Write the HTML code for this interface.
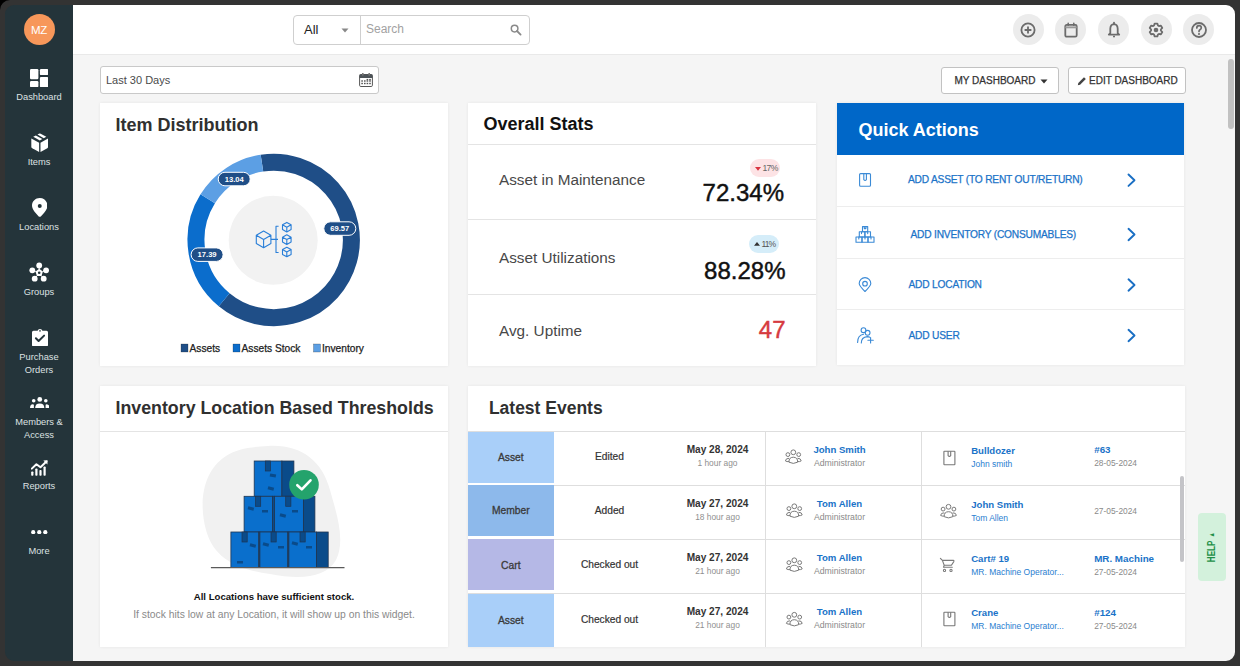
<!DOCTYPE html>
<html><head><meta charset="utf-8">
<style>
*{box-sizing:border-box;margin:0;padding:0}
html,body{width:1240px;height:666px;overflow:hidden;background:#f5f5f5;font-family:"Liberation Sans",sans-serif;position:relative}
.a{position:absolute}
#frame{position:absolute;left:5px;top:5px;width:1230px;height:656px;border-radius:9px;box-shadow:0 0 0 30px #333333;z-index:50;pointer-events:none}
#corner{position:absolute;left:0;top:0;width:11px;height:11px;background:#000;z-index:51}
#corner::after{content:"";position:absolute;left:0;top:0;width:22px;height:22px;border-radius:11px;background:#333333}
#side{position:absolute;left:0;top:0;width:73px;height:666px;background:#24343a}
#head{position:absolute;left:73px;top:0;width:1167px;height:55px;background:#fff;border-bottom:1px solid #e9e9e9}
.card{position:absolute;background:#fff;box-shadow:0 0 3px rgba(0,0,0,0.07)}
.nl{position:absolute;left:5px;width:68px;text-align:center;color:#dde1e2;font-size:9.3px;line-height:13px}
.ni{position:absolute;fill:#fff}
.ttl{position:absolute;font-weight:bold;font-size:18px;color:#303030;line-height:22px;white-space:nowrap}
.hc{position:absolute;top:14px;width:31px;height:31px;border-radius:50%;background:#ececec}
.hc svg{position:absolute;left:5.5px;top:5.5px;width:20px;height:20px}
.btn{position:absolute;top:66.5px;height:27px;border:1px solid #c2c2c2;border-radius:3px;background:#fff;font-size:10px;color:#333;line-height:25px;white-space:nowrap;-webkit-text-stroke:0.25px #333}
.qa{font-size:10.2px;color:#1b73c8;line-height:12px;white-space:nowrap;letter-spacing:-0.2px;-webkit-text-stroke:0.25px #1b73c8}
.tc{left:467.5px;width:86.7px;height:51px;font-size:10.3px;color:#3a3a3a;text-align:center;line-height:52px;-webkit-text-stroke:0.3px #3a3a3a}
.act{left:559px;width:101px;text-align:center;font-size:10.2px;color:#333;line-height:12px;-webkit-text-stroke:0.2px #333}
.dt{left:667px;width:101px;text-align:center;font-size:10.1px;font-weight:bold;color:#333;line-height:12px}
.ds{left:667px;width:101px;text-align:center;font-size:8.4px;color:#8f8f8f;line-height:10px}
.un{left:789.5px;width:100px;text-align:center;font-size:9.6px;font-weight:bold;color:#1a73c8;line-height:12px}
.ur{left:789.5px;width:100px;text-align:center;font-size:8.7px;color:#8a8a8a;line-height:11px}
.inm{left:971.2px;font-size:9.6px;font-weight:bold;color:#1a73c8;line-height:12px;white-space:nowrap}
.isb{left:971.2px;font-size:8.5px;color:#2a7ed0;line-height:11px;white-space:nowrap}
.nn{left:1094.2px;font-size:9.8px;font-weight:bold;color:#1a73c8;line-height:12px;white-space:nowrap}
.nd{left:1094.2px;font-size:8.4px;color:#8a8a8a;line-height:11px;white-space:nowrap}
</style></head>
<body>
<div id="side"></div>
<div id="head"></div>

<!-- avatar -->
<div class="a" style="left:23.5px;top:14px;width:31px;height:31px;border-radius:50%;background:#f7975a;color:#fff;font-size:11.5px;line-height:33px;text-align:center;letter-spacing:-0.2px">MZ</div>

<!-- sidebar items -->
<svg class="ni" style="left:30px;top:68.5px" width="18.3" height="18.3" viewBox="0 0 18.3 18.3">
  <rect x="0" y="0" width="8.4" height="10.2" rx="1.2"/><rect x="0" y="12.1" width="8.4" height="6.2" rx="1.2"/>
  <rect x="9.9" y="0" width="8.4" height="6.1" rx="1.2"/><rect x="9.9" y="7.9" width="8.4" height="10.4" rx="1.2"/>
</svg>
<div class="nl" style="top:91px">Dashboard</div>

<svg class="ni" style="left:30.5px;top:132.8px" width="17.6" height="19" viewBox="0 0 18 19.5">
  <path d="M0.3 5.6 L8.3 9.9 L8.3 19.4 L1.3 15.6 Q0.3 15 0.3 14 Z"/>
  <path d="M17.7 5.6 L9.7 9.9 L9.7 19.4 L16.7 15.6 Q17.7 15 17.7 14 Z"/>
  <path d="M2.3 3.9 L4.9 2.5 L11.6 6.2 L9 7.7 Z"/>
  <path d="M6.6 1.6 L8.1 0.8 Q9 0.4 9.9 0.8 L15.7 3.9 L13.1 5.4 Z"/>
</svg>
<div class="nl" style="top:156px">Items</div>

<svg class="ni" style="left:31.5px;top:197.5px" width="15.5" height="19" viewBox="0 0 15.5 19">
  <path fill-rule="evenodd" d="M7.75 0 C3.5 0 0 3.3 0 7.6 C0 11.6 4.2 15.9 6.7 18.4 Q7.75 19.3 8.8 18.4 C11.3 15.9 15.5 11.6 15.5 7.6 C15.5 3.3 12 0 7.75 0 Z M7.75 6 A2 2 0 1 0 7.75 10 A2 2 0 1 0 7.75 6 Z"/>
</svg>
<div class="nl" style="top:221px">Locations</div>

<svg class="ni" style="left:29px;top:262px" width="20" height="20" viewBox="0 0 20 20">
  <circle cx="10.2" cy="3.5" r="2.9"/><circle cx="3.3" cy="8.3" r="2.9"/><circle cx="17.1" cy="8.3" r="2.9"/>
  <circle cx="5.7" cy="16.7" r="2.9"/><circle cx="14.7" cy="16.7" r="2.9"/><path d="M10.2 3.5 L10.2 7 M3.3 8.3 L6.7 9.5 M17.1 8.3 L13.7 9.5 M5.7 16.7 L8 13.7 M14.7 16.7 L12.4 13.7" stroke="#fff" stroke-width="1"/>
  <path fill-rule="evenodd" d="M10.2 6.8 L13.9 9.5 L12.5 13.9 L7.9 13.9 L6.5 9.5 Z M10.2 9.4 A1.3 1.3 0 1 0 10.2 12 A1.3 1.3 0 1 0 10.2 9.4 Z"/>
</svg>
<div class="nl" style="top:286px">Groups</div>

<svg class="ni" style="left:31.5px;top:328.5px" width="16" height="17.5" viewBox="0 0 16 17.5">
  <path fill-rule="evenodd" d="M1.5 1.8 L5.6 1.8 Q6 0 8 0 Q10 0 10.4 1.8 L14.5 1.8 Q16 1.8 16 3.3 L16 16 Q16 17.5 14.5 17.5 L1.5 17.5 Q0 17.5 0 16 L0 3.3 Q0 1.8 1.5 1.8 Z M8 1.1 A0.8 0.8 0 1 0 8 2.7 A0.8 0.8 0 1 0 8 1.1 Z"/>
  <path d="M3.9 9.3 L6.6 12 L12.1 6.6" stroke="#24343a" stroke-width="2" fill="none" stroke-linecap="round" stroke-linejoin="round"/>
</svg>
<div class="nl" style="top:351px">Purchase</div>
<div class="nl" style="top:364px">Orders</div>

<svg class="ni" style="left:29.5px;top:396.5px" width="19.5" height="11.5" viewBox="0 0 19.5 11.5">
  <circle cx="9.75" cy="2.4" r="2.4"/><circle cx="3.7" cy="3.8" r="1.8"/><circle cx="15.8" cy="3.8" r="1.8"/>
  <path d="M5.2 11 Q5.2 6.6 9.75 6.6 Q14.3 6.6 14.3 11 Z"/>
  <path d="M0 11 Q0 7.5 2.8 7.2 Q3.9 7.2 3.9 8 L3.9 11 Z"/>
  <path d="M19.5 11 Q19.5 7.5 16.7 7.2 Q15.6 7.2 15.6 8 L15.6 11 Z"/>
</svg>
<div class="nl" style="top:416px">Members &amp;</div>
<div class="nl" style="top:429px">Access</div>

<svg class="ni" style="left:31px;top:459.5px" width="17" height="16" viewBox="0 0 17 16">
  <rect x="0.2" y="11.5" width="2.2" height="4.3" rx="0.8"/><rect x="4.3" y="8.4" width="2.2" height="7.4" rx="0.8"/>
  <rect x="8.4" y="10" width="2.2" height="5.8" rx="0.8"/><rect x="12.5" y="6.5" width="2.2" height="9.3" rx="0.8"/>
  <path d="M0.8 8.6 L5.4 4.2 L9.5 7.2 L15.4 1.6" stroke="#fff" stroke-width="2" fill="none" stroke-linecap="round" stroke-linejoin="round"/>
  <path d="M12.3 0.5 L16.6 0.3 L16.4 4.6 Z"/>
</svg>
<div class="nl" style="top:480px">Reports</div>

<svg class="ni" style="left:31px;top:529.5px" width="16.5" height="4.5" viewBox="0 0 16.5 4.5">
  <circle cx="2.2" cy="2.2" r="2.1"/><circle cx="8.25" cy="2.2" r="2.1"/><circle cx="14.3" cy="2.2" r="2.1"/>
</svg>
<div class="nl" style="top:545px">More</div>

<!-- search -->
<div class="a" style="left:292.5px;top:14.5px;width:237px;height:30px;border:1px solid #cfcfcf;border-radius:4px;background:#fff"></div>
<div class="a" style="left:359.5px;top:15px;width:1px;height:29px;background:#cfcfcf"></div>
<div class="a" style="left:304px;top:22px;font-size:13px;color:#222;line-height:16px">All</div>
<svg class="a" style="left:340.5px;top:27.5px" width="8" height="5" viewBox="0 0 8 5"><path d="M0.5 0.5 L7.5 0.5 L4 4.5 Z" fill="#888"/></svg>
<div class="a" style="left:366px;top:22px;font-size:12px;color:#a2a2a2;line-height:15px">Search</div>
<svg class="a" style="left:510px;top:23.5px" width="12" height="12" viewBox="0 0 12 12"><circle cx="4.6" cy="4.6" r="3.3" stroke="#8a8a8a" stroke-width="1.5" fill="none"/><path d="M7 7 L10.6 10.6" stroke="#8a8a8a" stroke-width="1.8" stroke-linecap="round"/></svg>

<!-- header icons -->
<div class="hc" style="left:1012.5px"><svg viewBox="0 0 20 20"><circle cx="10" cy="10" r="6.6" stroke="#6b6b6b" stroke-width="1.8" fill="none"/><path d="M10 6.6 L10 13.4 M6.6 10 L13.4 10" stroke="#6b6b6b" stroke-width="1.8"/></svg></div>
<div class="hc" style="left:1055px"><svg viewBox="0 0 20 20"><rect x="4.3" y="4.9" width="11.4" height="11.8" rx="1.4" stroke="#6b6b6b" stroke-width="1.8" fill="none"/><rect x="4.3" y="6.4" width="11.4" height="1.9" fill="#9a9a9a"/><path d="M7.2 3.4 L7.2 5.2 M12.8 3.4 L12.8 5.2" stroke="#6b6b6b" stroke-width="1.6" stroke-linecap="round"/></svg></div>
<div class="hc" style="left:1098px"><svg viewBox="0 0 20 20"><path d="M10 4.2 Q13.6 4.4 13.7 8.8 L13.7 13.2 L15.2 14.6 L4.8 14.6 L6.3 13.2 L6.3 8.8 Q6.4 4.4 10 4.2 Z" stroke="#6b6b6b" stroke-width="1.8" fill="none" stroke-linejoin="round"/><path d="M9 16.3 L11 16.3 L10 17.2 Z" stroke="#6b6b6b" stroke-width="1" fill="#6b6b6b"/><path d="M10 2.6 L10 4.2" stroke="#6b6b6b" stroke-width="1.8" stroke-linecap="round"/></svg></div>
<div class="hc" style="left:1140.5px"><svg viewBox="0 0 20 20"><path d="M8.01 5.52 L8.63 3.54 L11.37 3.54 L11.99 5.52 L12.88 6.04 L14.90 5.58 L16.28 7.96 L14.87 9.49 L14.87 10.51 L16.28 12.04 L14.90 14.42 L12.88 13.96 L11.99 14.48 L11.37 16.46 L8.63 16.46 L8.01 14.48 L7.12 13.96 L5.10 14.42 L3.72 12.04 L5.13 10.51 L5.13 9.49 L3.72 7.96 L5.10 5.58 L7.12 6.04 Z" stroke="#6b6b6b" stroke-width="1.8" fill="none" stroke-linejoin="round"/><circle cx="10" cy="10" r="2.3" fill="#6b6b6b"/></svg></div>
<div class="hc" style="left:1183px"><svg viewBox="0 0 20 20"><circle cx="10" cy="10" r="7" stroke="#6b6b6b" stroke-width="1.8" fill="none"/><path d="M7.8 8 Q7.8 5.6 10 5.6 Q12.3 5.6 12.3 7.7 Q12.3 9 10.9 9.7 Q10 10.2 10 11.5" stroke="#6b6b6b" stroke-width="1.7" fill="none" stroke-linecap="round"/><circle cx="10" cy="14" r="1.05" fill="#6b6b6b"/></svg></div>

<!-- date filter -->
<div class="a" style="left:99.5px;top:66px;width:279px;height:27.5px;border:1px solid #c9c9c9;border-radius:3px;background:#fff"></div>
<div class="a" style="left:106px;top:73px;font-size:11px;color:#4a4a4a;line-height:14px">Last 30 Days</div>
<svg class="a" style="left:359px;top:73px" width="14" height="14" viewBox="0 0 14 14">
  <rect x="0.6" y="1.5" width="12.8" height="12" rx="1.2" fill="#fff" stroke="#555" stroke-width="1"/>
  <rect x="0.6" y="1.5" width="12.8" height="3.5" fill="#4d5358"/>
  <rect x="3" y="0" width="1.6" height="2.6" fill="#777"/><rect x="9.4" y="0" width="1.6" height="2.6" fill="#777"/>
  <g fill="#555"><rect x="2.3" y="7.3" width="1.6" height="1.4"/><rect x="5" y="7.3" width="1.6" height="1.4"/><rect x="7.6" y="5.9" width="1.6" height="1.4"/><rect x="10.2" y="5.9" width="1.6" height="1.4"/><rect x="7.6" y="7.3" width="1.6" height="1.4"/><rect x="10.2" y="7.3" width="1.6" height="1.4"/>
  <rect x="2.3" y="9.8" width="1.6" height="1.4"/><rect x="5" y="9.8" width="1.6" height="1.4"/><rect x="7.6" y="9.8" width="1.6" height="1.4"/><rect x="10.2" y="9.8" width="1.6" height="1.4"/></g>
</svg>

<!-- dashboard buttons -->
<div class="btn" style="left:940.5px;width:118px;padding-left:13px">MY DASHBOARD<svg class="a" style="left:98px;top:11px" width="8" height="5" viewBox="0 0 8 5"><path d="M0.5 0.5 L7.5 0.5 L4 4.5 Z" fill="#333"/></svg></div>
<div class="btn" style="left:1068px;width:117.5px;padding-left:20px"><svg class="a" style="left:8px;top:8px" width="10" height="10" viewBox="0 0 10 10"><path d="M0.8 9.2 L1.3 6.9 L7 1.2 L8.8 3 L3.1 8.7 Z" fill="#444"/></svg>EDIT DASHBOARD</div>

<!-- scrollbar -->
<div class="a" style="left:1228px;top:59px;width:6px;height:70px;border-radius:3px;background:#c1c1c1"></div>

<!-- CARD: Item Distribution -->
<div class="card" style="left:100px;top:103px;width:348px;height:262.5px"></div>
<div class="ttl" style="left:115.5px;top:113.5px">Item Distribution</div>
<svg class="a" style="left:0;top:0" width="460" height="370" viewBox="0 0 460 370">
  <circle cx="273.2" cy="240.3" r="44.5" fill="#f2f2f2"/>
  <path d="M261.95 163.09 A77.7 77.7 0 1 1 224.17 299.77" stroke="#1f4e87" stroke-width="17" fill="none"/>
  <path d="M224.17 299.77 A77.7 77.7 0 0 1 207.73 198.84" stroke="#0b6dcc" stroke-width="17" fill="none"/>
  <path d="M207.73 198.84 A77.7 77.7 0 0 1 261.95 163.09" stroke="#5c9fe4" stroke-width="17" fill="none"/>
  <g stroke="#2a7fd8" stroke-width="1.1" fill="none" stroke-linejoin="round">
    <path d="M263.6 231.1 L270.9 235.2 L270.9 243.6 L263.6 247.7 L256.3 243.6 L256.3 235.2 Z M256.3 235.2 L263.6 239.4 L270.9 235.2 M263.6 239.4 L263.6 247.7"/>
    <path d="M270.9 239.4 L278 239.4 M278.6 226.3 L276 226.3 L276 252.5 L278.6 252.5"/>
    <path d="M286.8 222.4 L291.1 224.8 L291.1 229.6 L286.8 232 L282.5 229.6 L282.5 224.8 Z M282.5 224.8 L286.8 227.2 L291.1 224.8 M286.8 227.2 L286.8 232"/>
    <path d="M286.8 234.8 L291.1 237.2 L291.1 242 L286.8 244.4 L282.5 242 L282.5 237.2 Z M282.5 237.2 L286.8 239.6 L291.1 237.2 M286.8 239.6 L286.8 244.4"/>
    <path d="M286.8 247.2 L291.1 249.6 L291.1 254.4 L286.8 256.8 L282.5 254.4 L282.5 249.6 Z M282.5 249.6 L286.8 252 L291.1 249.6 M286.8 252 L286.8 256.8"/>
  </g>
  <g font-family="Liberation Sans" font-size="7.6" font-weight="bold" fill="#fff" text-anchor="middle">
    <rect x="323.8" y="221.8" width="32" height="13.5" rx="6.75" fill="#1f4e87" stroke="#fff" stroke-width="1"/>
    <text x="339.8" y="231">69.57</text>
    <rect x="218.2" y="172.3" width="32" height="13.5" rx="6.75" fill="#1f4e87" stroke="#fff" stroke-width="1"/>
    <text x="234.2" y="181.5">13.04</text>
    <rect x="191.1" y="247.9" width="32" height="13.5" rx="6.75" fill="#1f4e87" stroke="#fff" stroke-width="1"/>
    <text x="207.1" y="257.1">17.39</text>
  </g>
  <g font-family="Liberation Sans" font-size="10.2" fill="#222" stroke="#222" stroke-width="0.25">
    <rect x="181" y="344" width="7" height="8" fill="#1f4e87"/><text x="189.5" y="352">Assets</text>
    <rect x="233" y="344" width="7" height="8" fill="#0b6dcc"/><text x="241.5" y="352">Assets Stock</text>
    <rect x="313.5" y="344" width="7" height="8" fill="#5c9fe4"/><text x="322" y="352">Inventory</text>
  </g>
</svg>

<!-- CARD: Overall Stats -->
<div class="card" style="left:467.5px;top:103px;width:348px;height:262.5px"></div>
<div class="ttl" style="left:483.5px;top:113px;color:#111">Overall Stats</div>
<div class="a" style="left:467.5px;top:144px;width:348px;height:1px;background:#e4e4e4"></div>
<div class="a" style="left:467.5px;top:219px;width:348px;height:1px;background:#e4e4e4"></div>
<div class="a" style="left:467.5px;top:294px;width:348px;height:1px;background:#e4e4e4"></div>
<div class="a" style="left:499px;top:171px;font-size:15.3px;color:#484848;line-height:18px">Asset in Maintenance</div>
<div class="a" style="left:499px;top:248.5px;font-size:15.3px;color:#484848;line-height:18px">Asset Utilizations</div>
<div class="a" style="left:499px;top:321.5px;font-size:15.3px;color:#484848;line-height:18px">Avg. Uptime</div>
<div class="a" style="right:456px;top:178.8px;font-size:24px;color:#111;line-height:28px;-webkit-text-stroke:0.45px #111">72.34%</div>
<div class="a" style="right:454.5px;top:256.8px;font-size:24px;color:#111;line-height:28px;-webkit-text-stroke:0.45px #111">88.28%</div>
<div class="a" style="right:454.5px;top:315.5px;font-size:24px;color:#d63b3f;line-height:28px;-webkit-text-stroke:0.45px #d63b3f">47</div>
<div class="a" style="left:750px;top:159px;width:29.5px;height:17.5px;border-radius:9px;background:#fde3e5"></div>
<svg class="a" style="left:754.5px;top:166.5px" width="6" height="4" viewBox="0 0 6 4"><path d="M0 0 L6 0 L3 3.8 Z" fill="#d93340"/></svg>
<div class="a" style="left:762.5px;top:162.5px;font-size:8.6px;color:#666;line-height:10px;letter-spacing:-0.7px">17%</div>
<div class="a" style="left:749.2px;top:235px;width:29.5px;height:17.5px;border-radius:9px;background:#d5edf9"></div>
<svg class="a" style="left:753.5px;top:241.5px" width="6" height="4" viewBox="0 0 6 4"><path d="M0 3.8 L6 3.8 L3 0 Z" fill="#333"/></svg>
<div class="a" style="left:761.5px;top:238.5px;font-size:8.6px;color:#555;line-height:10px;letter-spacing:-0.9px">11%</div>

<!-- CARD: Quick Actions -->
<div class="card" style="left:837px;top:103px;width:347px;height:261.5px"></div>
<div class="a" style="left:837px;top:103px;width:347px;height:52px;background:#0067c8"></div>
<div class="ttl" style="left:858.5px;top:119px;color:#fff">Quick Actions</div>
<div class="a" style="left:837px;top:206px;width:347px;height:1px;background:#ededed"></div>
<div class="a" style="left:837px;top:258px;width:347px;height:1px;background:#ededed"></div>
<div class="a" style="left:837px;top:309px;width:347px;height:1px;background:#ededed"></div>
<div class="a qa" style="left:908px;top:174px">ADD ASSET (TO RENT OUT/RETURN)</div>
<div class="a qa" style="left:910.5px;top:228.5px">ADD INVENTORY (CONSUMABLES)</div>
<div class="a qa" style="left:908.5px;top:279px">ADD LOCATION</div>
<div class="a qa" style="left:908.5px;top:329.5px">ADD USER</div>
<svg class="a" style="left:0;top:0" width="1190" height="370" viewBox="0 0 1190 370">
  <g stroke="#1a6fc4" stroke-width="1.9" fill="none" stroke-linecap="round" stroke-linejoin="round">
    <path d="M1128.5 174.5 L1134.5 180.2 L1128.5 185.9"/>
    <path d="M1128.5 228.8 L1134.5 234.5 L1128.5 240.2"/>
    <path d="M1128.5 279.3 L1134.5 285 L1128.5 290.7"/>
    <path d="M1128.5 329.8 L1134.5 335.5 L1128.5 341.2"/>
  </g>
  <g stroke="#3b8ad6" stroke-width="1.1" fill="none" stroke-linejoin="round" stroke-linecap="round">
    <rect x="859.6" y="173.6" width="10.9" height="12.6" rx="1"/>
    <path d="M863.8 173.6 L863.8 179.6 Q865.1 181.4 866.4 179.6 L866.4 173.6"/>
    <rect x="862.5" y="226.6" width="5.2" height="5.2"/><path d="M864.3 226.6 L864.3 228.6 L865.9 228.6 L865.9 226.6"/>
    <rect x="859.3" y="231.8" width="5.6" height="5.2"/><rect x="864.9" y="231.8" width="5.6" height="5.2"/>
    <rect x="856" y="237" width="6" height="5.2"/><rect x="862" y="237" width="6" height="5.2"/><rect x="868" y="237" width="6" height="5.2"/>
    <path d="M861.5 231.8 L861.5 233.6 M867.7 231.8 L867.7 233.6 M858.8 237 L858.8 239 M865 237 L865 239 M871 237 L871 239"/>
    <path d="M865 291.5 C861 287.4 859.2 285 859.2 283.4 A5.8 5.8 0 0 1 870.8 283.4 C870.8 285 869 287.4 865 291.5 Z"/>
    <circle cx="865" cy="283.7" r="2.3"/>
    <circle cx="863.5" cy="330.2" r="2.4"/>
    <path d="M857.6 342.5 Q857.6 335.2 863.5 334.3"/>
    <circle cx="867.6" cy="332.8" r="2.4"/>
    <path d="M861.3 343 Q861.3 337.2 867.3 336.6 Q868.8 336.6 869.8 337.2"/>
    <path d="M870.6 337.6 L870.6 343 M867.9 340.3 L873.3 340.3"/>
  </g>
</svg>

<!-- CARD: Inventory thresholds -->
<div class="card" style="left:100px;top:386px;width:348px;height:260.5px"></div>
<div class="ttl" style="left:115.5px;top:397px;font-size:17.8px">Inventory Location Based Thresholds</div>
<div class="a" style="left:100px;top:431px;width:348px;height:1px;background:#e4e4e4"></div>
<svg class="a" style="left:0;top:0" width="460" height="660" viewBox="0 0 460 660">
  <path d="M268 446 C300 444 322 460 330 490 C336 512 346 540 336 560 C326 578 300 580 270 574 C240 570 214 560 206 530 C198 500 204 470 226 456 C238 448 252 447 268 446 Z" fill="#f1f1f1"/>
  <g stroke="#1f3550" stroke-width="0.8">
    <rect x="254.2" y="461" width="27.7" height="35.3" fill="#0a6fcc"/><rect x="281.9" y="461" width="12" height="35.3" fill="#0a4b8a"/>
    <rect x="244.1" y="496.3" width="28.4" height="35.7" fill="#0a6fcc"/><rect x="272.5" y="496.3" width="2.1" height="35.7" fill="#0a4b8a"/>
    <rect x="274.6" y="496.3" width="28.8" height="35.7" fill="#0a6fcc"/><rect x="303.4" y="496.3" width="11.5" height="35.7" fill="#0a4b8a"/>
    <rect x="230.9" y="532" width="27.9" height="35.5" fill="#0a6fcc"/><rect x="258.8" y="532" width="1.1" height="35.5" fill="#0a4b8a"/>
    <rect x="259.9" y="532" width="27.9" height="35.5" fill="#0a6fcc"/><rect x="287.8" y="532" width="1.1" height="35.5" fill="#0a4b8a"/>
    <rect x="288.9" y="532" width="27.7" height="35.5" fill="#0a6fcc"/><rect x="316.6" y="532" width="11.6" height="35.5" fill="#0a4b8a"/>
  </g>
  <g fill="#0a4b8a" stroke="#1f3550" stroke-width="0.7">
    <rect x="265.3" y="461" width="5.2" height="10"/>
    <rect x="255.5" y="496.3" width="5.2" height="10"/><rect x="285.7" y="496.3" width="5.2" height="10"/>
    <rect x="242" y="532" width="5.2" height="10"/><rect x="271" y="532" width="5.2" height="10"/><rect x="300" y="532" width="5.2" height="10"/>
  </g>
  <g fill="#0a4b8a">
    <rect x="270" y="474" width="6" height="3" transform="rotate(10 273 475)"/><rect x="268" y="487" width="6" height="3" transform="rotate(15 271 488)"/>
    <rect x="248" y="507" width="6" height="3" transform="rotate(15 251 508)"/><rect x="262" y="510" width="6" height="2.5"/>
    <rect x="280" y="514" width="6" height="3" transform="rotate(15 283 515)"/><rect x="292" y="510" width="6" height="2.5"/>
    <rect x="250" y="544" width="6" height="3" transform="rotate(15 253 545)"/><rect x="237" y="561" width="6" height="2.5"/>
    <rect x="263" y="543" width="6" height="3" transform="rotate(15 266 544)"/><rect x="278" y="546" width="6" height="2.5"/>
    <rect x="292" y="542" width="6" height="3" transform="rotate(15 295 543)"/><rect x="306" y="546" width="6" height="2.5"/>
  </g>
  <path d="M210.9 567.7 L344.5 567.7" stroke="#5a5a5a" stroke-width="1.2"/>
  <circle cx="304" cy="484.7" r="14.8" fill="#24a36c"/>
  <path d="M297.3 485.2 L301.8 489.4 L310.5 480.3" stroke="#fff" stroke-width="2.6" fill="none" stroke-linecap="round" stroke-linejoin="round"/>
</svg>
<div class="a" style="left:100px;top:590.5px;width:348px;text-align:center;font-size:9.6px;font-weight:bold;color:#111;line-height:12px">All Locations have sufficient stock.</div>
<div class="a" style="left:100px;top:608px;width:348px;text-align:center;font-size:10.35px;color:#8a8a8a;line-height:13px">If stock hits low at any Location, it will show up on this widget.</div>

<!-- CARD: Latest Events -->
<div class="card" style="left:467.5px;top:386px;width:717px;height:261px"></div>
<div class="ttl" style="left:488.9px;top:396.5px;font-size:17.5px">Latest Events</div>
<div class="a" style="left:467.5px;top:431px;width:717px;height:1px;background:#dedede"></div>
<div class="a" style="left:467.5px;top:485px;width:717px;height:1px;background:#dedede"></div>
<div class="a" style="left:467.5px;top:539px;width:717px;height:1px;background:#dedede"></div>
<div class="a" style="left:467.5px;top:593px;width:717px;height:1px;background:#dedede"></div>
<div class="a" style="left:765px;top:431px;width:1px;height:216px;background:#dedede"></div>
<div class="a" style="left:920.5px;top:431px;width:1px;height:216px;background:#dedede"></div>
<div class="a" style="left:1180.2px;top:476px;width:4.3px;height:86px;border-radius:2px;background:#c4c4c8"></div>

<div class="a tc" style="top:431.5px;background:#a9cff9">Asset</div>
<div class="a tc" style="top:485px;background:#8db9eb">Member</div>
<div class="a tc" style="top:539px;background:#b5b8e6;line-height:53px">Cart</div>
<div class="a tc" style="top:593.5px;background:#a9cff9;height:53.5px;line-height:53px">Asset</div>

<div class="a act" style="top:451px">Edited</div>
<div class="a act" style="top:505px">Added</div>
<div class="a act" style="top:559px">Checked out</div>
<div class="a act" style="top:613.5px">Checked out</div>

<div class="a dt" style="top:443.5px">May 28, 2024</div><div class="a ds" style="top:457.5px">1 hour ago</div>
<div class="a dt" style="top:497.5px">May 27, 2024</div><div class="a ds" style="top:511.5px">18 hour ago</div>
<div class="a dt" style="top:551.5px">May 27, 2024</div><div class="a ds" style="top:565.5px">21 hour ago</div>
<div class="a dt" style="top:606px">May 27, 2024</div><div class="a ds" style="top:620px">21 hour ago</div>

<div class="a un" style="top:444px">John Smith</div><div class="a ur" style="top:457.5px">Administrator</div>
<div class="a un" style="top:498px">Tom Allen</div><div class="a ur" style="top:512px">Administrator</div>
<div class="a un" style="top:552px">Tom Allen</div><div class="a ur" style="top:566px">Administrator</div>
<div class="a un" style="top:606px">Tom Allen</div><div class="a ur" style="top:620px">Administrator</div>

<div class="a inm" style="top:444.5px">Bulldozer</div><div class="a isb" style="top:458.5px">John smith</div>
<div class="a inm" style="top:499px">John Smith</div><div class="a isb" style="top:513px">Tom Allen</div>
<div class="a inm" style="top:553px">Cart# 19</div><div class="a isb" style="top:567px">MR. Machine Operator...</div>
<div class="a inm" style="top:607px">Crane</div><div class="a isb" style="top:621px">MR. Machine Operator...</div>

<div class="a nn" style="top:444px">#63</div><div class="a nd" style="top:457.5px">28-05-2024</div>
<div class="a nd" style="top:506px">27-05-2024</div>
<div class="a nn" style="top:553px">MR. Machine</div><div class="a nd" style="top:567px">27-05-2024</div>
<div class="a nn" style="top:607px">#124</div><div class="a nd" style="top:621px">27-05-2024</div>

<svg class="a" style="left:0;top:0" width="1190" height="660" viewBox="0 0 1190 660">
  <defs>
    <g id="grp" stroke="#7a7a7a" stroke-width="1" fill="none">
      <circle cx="0" cy="-4.7" r="2.4"/><circle cx="-5.4" cy="-2.4" r="1.9"/><circle cx="5.4" cy="-2.4" r="1.9"/>
      <path d="M-4.3 5.2 Q-4.6 0.3 0 0.2 Q4.6 0.3 4.3 5.2 Q0 7.6 -4.3 5.2 Z"/>
      <path d="M-4.2 1.3 Q-7.6 1.2 -7.9 3.9 Q-6.4 4.9 -4.3 4.6"/>
      <path d="M4.2 1.3 Q7.6 1.2 7.9 3.9 Q6.4 4.9 4.3 4.6"/>
    </g>
    <g id="tag" stroke="#777" stroke-width="1.1" fill="none">
      <rect x="-5.5" y="-6.8" width="11" height="13.6" rx="0.6"/>
      <path d="M-1.3 -6.8 L-1.3 -2.4 Q0 -0.9 1.3 -2.4 L1.3 -6.8"/>
    </g>
  </defs>
  <use href="#grp" x="793.3" y="457"/>
  <use href="#grp" x="794.3" y="511"/>
  <use href="#grp" x="794.3" y="565"/>
  <use href="#grp" x="794.3" y="619.5"/>
  <use href="#tag" x="949.4" y="458"/>
  <use href="#grp" x="948.5" y="511.5"/>
  <use href="#tag" x="949.4" y="619"/>
  <g stroke="#7a7a7a" stroke-width="1.1" fill="none" stroke-linejoin="round" stroke-linecap="round">
    <path d="M940.4 558.3 L942.4 560.4 L953.3 560.4 Q954.3 560.6 953.8 561.6 L951.6 565 Q951.3 565.3 950.8 565.3 L944.2 565.3 M942.4 560.4 L944.2 565.3 L943.5 567.3 L952.3 567.3"/>
    <circle cx="944.5" cy="570.4" r="1.1"/><circle cx="951" cy="570.4" r="1.1"/>
  </g>
</svg>

<!-- HELP -->
<div class="a" style="left:1197.5px;top:513px;width:28.5px;height:67.5px;border-radius:4px;background:#d3f1dc"></div>
<div class="a" style="left:1187px;top:541px;width:50px;height:12px;transform:rotate(-90deg) scaleX(0.78);transform-origin:25px 6px;font-size:10.3px;font-weight:bold;color:#1e9048;line-height:12px;text-align:center;letter-spacing:0px">HELP<span style="font-size:7.5px;position:relative;top:-1.5px;margin-left:4px">&#9650;</span></div>

<svg class="a" style="left:0;top:0;z-index:50" width="1240" height="666" viewBox="0 0 1240 666"><path fill="#333333" fill-rule="evenodd" d="M0 0 H1240 V666 H0 Z M14 5 H1226 A9 9 0 0 1 1235 14 V652 A9 9 0 0 1 1226 661 H14 A9 9 0 0 1 5 652 V14 A9 9 0 0 1 14 5 Z"/></svg>
<svg class="a" style="left:0;top:0;z-index:51" width="12" height="12" viewBox="0 0 12 12"><path d="M0 0 H10 A10 10 0 0 0 0 10 Z" fill="#000"/></svg>
</body></html>
